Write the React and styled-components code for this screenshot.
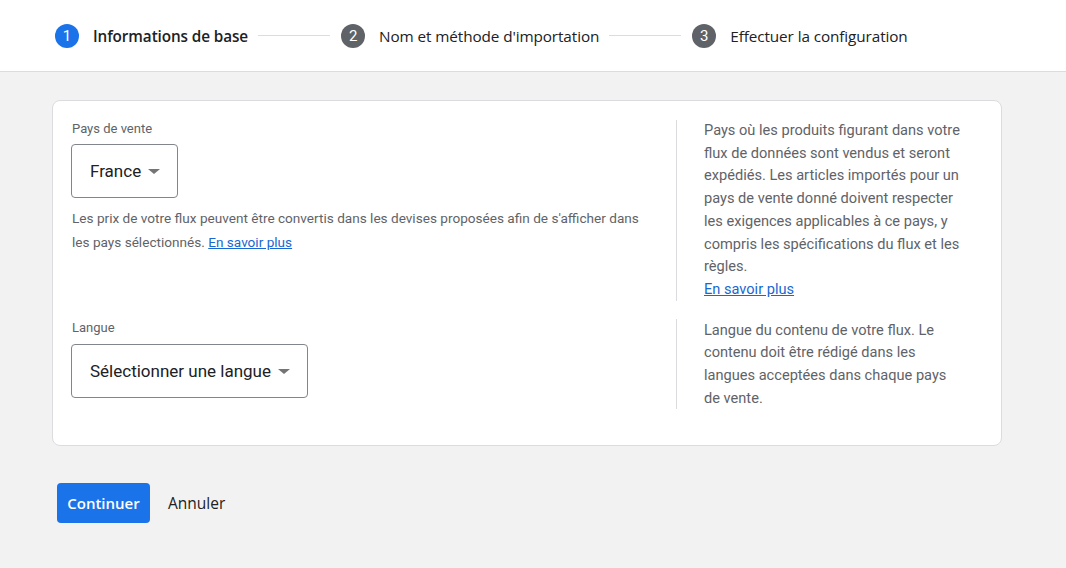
import React from "react";
import styled, { createGlobalStyle } from "styled-components";

const Global = createGlobalStyle`
  html, body { margin: 0; padding: 0; }
  body {
    background: #f2f2f2;
    font-family: Roboto, "Noto Sans", Arial, sans-serif;
    -webkit-font-smoothing: antialiased;
  }
`;

const Page = styled.div`
  width: 1066px;
  min-height: 568px;
  background: #f2f2f2;
`;

const Header = styled.header`
  height: 72px;
  background: #fff;
  border-bottom: 1px solid #dadce0;
  display: flex;
  align-items: center;
  padding-left: 55px;
  box-sizing: border-box;
`;

const Step = styled.div`
  display: flex;
  align-items: center;
`;

const StepNum = styled.span`
  width: 24px;
  height: 24px;
  border-radius: 50%;
  background: ${(p) => (p.$active ? "#1a73e8" : "#5f6368")};
  color: #fff;
  font-size: 15px;
  display: flex;
  align-items: center;
  justify-content: center;
  font-family: Roboto, Arial, sans-serif;
`;

const StepLabel = styled.span`
  margin-left: 14px;
  font-size: 15.3px;
  font-weight: ${(p) => (p.$active ? 600 : 400)};
  color: #202124;
  font-family: "Open Sans", Roboto, Arial, sans-serif;
  letter-spacing: -0.1px;
`;

const Connector = styled.span`
  width: 72px;
  height: 1px;
  background: #dadce0;
  margin: 0 11px 0 10px;
`;

const Main = styled.main`
  padding: 28px 64px 0 52px;
`;

const Card = styled.section`
  background: #fff;
  border: 1px solid #dadce0;
  border-radius: 8px;
  padding: 19px 20px 36px 18px;
  display: flex;
  flex-direction: column;
  gap: 18px;
`;

const Row = styled.div`
  display: grid;
  grid-template-columns: 605px 1fr;
`;

const Field = styled.div`
  padding-right: 24px;
`;

const Label = styled.div`
  font-size: 13px;
  line-height: 17px;
  color: #5f6368;
  padding-left: 1px;
  margin-bottom: ${(p) => p.$gap || 7}px;
`;

const Select = styled.button`
  height: 54px;
  box-sizing: border-box;
  border: 1px solid #80868b;
  border-radius: 4px;
  background: #fff;
  display: inline-flex;
  align-items: center;
  gap: 7px;
  padding: 0 17px 0 18px;
  font-family: Roboto, Arial, sans-serif;
  font-size: 17px;
  color: #202124;
  cursor: pointer;
`;

const Caret = styled.span`
  width: 0;
  height: 0;
  border-left: 6px solid transparent;
  border-right: 6px solid transparent;
  border-top: 5px solid #757575;
  margin-top: 1px;
`;

const Helper = styled.p`
  margin: 8px 0 0;
  padding-left: 1px;
  font-size: 13.6px;
  line-height: 24px;
  color: #5f6368;
`;

const Link = styled.a`
  color: #1967d2;
  text-decoration: underline;
  cursor: pointer;
`;

const Aside = styled.div`
  border-left: 1px solid #dadce0;
  padding-left: 27px;
  padding-right: 8px;
`;

const AsideText = styled.p`
  margin: ${(p) => (p.$shift ? "-1px 0 0" : "0")};
  font-size: 14.6px;
  line-height: 22.7px;
  color: #5f6368;
  max-width: 258px;
`;

const Actions = styled.div`
  display: flex;
  align-items: center;
  gap: 10px;
  margin: 37px 0 0 5px;
`;

const Primary = styled.button`
  height: 40px;
  padding: 0 9px;
  min-width: 93px;
  border: none;
  border-radius: 4px;
  background: #1a73e8;
  color: #fff;
  font-family: "Open Sans", Roboto, Arial, sans-serif;
  font-size: 15px;
  font-weight: 600;
  cursor: pointer;
`;

const TextButton = styled.button`
  height: 40px;
  padding: 0 8px;
  border: none;
  background: transparent;
  color: #202124;
  font-family: "Open Sans", Roboto, Arial, sans-serif;
  font-size: 15.5px;
  font-weight: 500;
  cursor: pointer;
`;

const steps = [
  { n: 1, label: "Informations de base", active: true },
  { n: 2, label: "Nom et méthode d'importation" },
  { n: 3, label: "Effectuer la configuration" },
];

export default function App() {
  return (
    <Page>
      <Global />
      <Header>
        {steps.map((s, i) => (
          <React.Fragment key={s.n}>
            <Step>
              <StepNum $active={s.active}>{s.n}</StepNum>
              <StepLabel $active={s.active}>{s.label}</StepLabel>
            </Step>
            {i < steps.length - 1 && <Connector />}
          </React.Fragment>
        ))}
      </Header>
      <Main>
        <Card>
          <Row>
            <Field>
              <Label>Pays de vente</Label>
              <Select>
                France <Caret />
              </Select>
              <Helper>
                Les prix de votre flux peuvent être convertis dans les devises
                proposées afin de s'afficher dans les pays sélectionnés.{" "}
                <Link>En savoir plus</Link>
              </Helper>
            </Field>
            <Aside>
              <AsideText $shift>
                Pays où les produits figurant dans votre flux de données sont
                vendus et seront expédiés. Les articles importés pour un pays de
                vente donné doivent respecter les exigences applicables à ce
                pays, y compris les spécifications du flux et les règles.
                <br />
                <Link>En savoir plus</Link>
              </AsideText>
            </Aside>
          </Row>
          <Row>
            <Field>
              <Label $gap={8}>Langue</Label>
              <Select>
                Sélectionner une langue <Caret />
              </Select>
            </Field>
            <Aside>
              <AsideText>
                Langue du contenu de votre flux. Le contenu doit être rédigé
                dans les langues acceptées dans chaque pays de vente.
              </AsideText>
            </Aside>
          </Row>
        </Card>
        <Actions>
          <Primary>Continuer</Primary>
          <TextButton>Annuler</TextButton>
        </Actions>
      </Main>
    </Page>
  );
}
